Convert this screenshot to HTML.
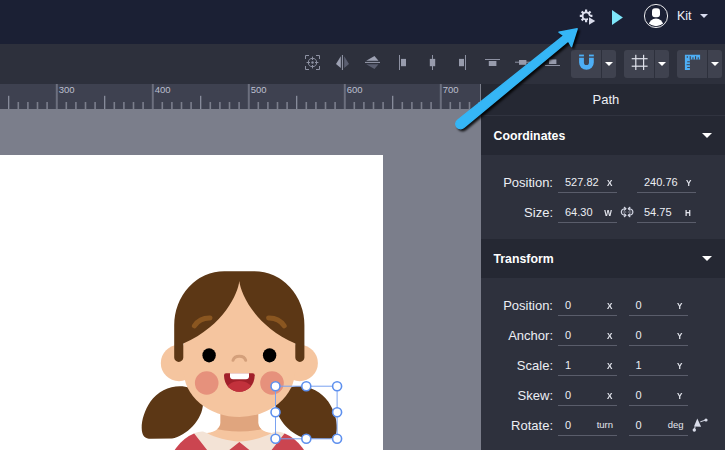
<!DOCTYPE html>
<html>
<head>
<meta charset="utf-8">
<style>
*{box-sizing:border-box;margin:0;padding:0}
html,body{width:725px;height:450px;overflow:hidden;background:#7b7e8b;font-family:"Liberation Sans",sans-serif;}
#app{position:relative;width:725px;height:450px;overflow:hidden}
.abs{position:absolute}
#topbar{left:0;top:0;width:725px;height:44px;background:#1b2034}
#toolbar{left:0;top:44px;width:725px;height:40px;background:#2d303c}
#ruler{left:0;top:84px;width:480px;height:25px;background:#3e4150;overflow:hidden}
#canvas{left:0;top:109px;width:481px;height:341px;background:#7b7e8b}
#art{left:0;top:155px;width:383px;height:295px;background:#fff}
#panel{left:481px;top:84px;width:244px;height:366px;background:#2e313d}
.sechead{left:0;width:244px;height:40px;background:#252833;color:#fff;font-weight:bold;font-size:12.3px;line-height:40px;padding-left:12.5px}
.lbl{color:#eceef4;font-size:13px;text-align:right;width:72px;left:0;line-height:16px;margin-top:2px}
.fld{border-bottom:1px solid #5a5d6b;height:22px;color:#eceef4;font-size:11px;line-height:16px}
.fld .v{position:absolute;left:7px;top:3px}
.fld .u{position:absolute;right:5px;top:4px;font-size:9.5px;font-weight:bold;color:#e4e6ee;transform:scaleX(0.85);transform-origin:right center}
.fld .u.w{font-size:9.5px;font-weight:normal;right:4px;top:3px;transform:none}
.tbtn{top:6px;height:28px;width:45px;background:#3f424f;border-radius:3px}
.tbtn .dv{position:absolute;left:30px;top:0;width:1px;height:28px;background:#2d303c}
.caret{position:absolute;width:0;height:0;border-left:5px solid transparent;border-right:5px solid transparent;border-top:5px solid #fff}
.rl{position:absolute;top:1px;font-size:9.5px;color:#bcbfce;line-height:10px}
</style>
</head>
<body>
<div id="app">
<div id="canvas" class="abs"></div>
<div id="art" class="abs"></div>
<svg class="abs" style="left:0;top:155px" width="383" height="295" viewBox="0 155 383 295">
<!-- pigtails -->
<path d="M190 388C177 382.8 159 389 150.5 401.5C144.8 410 141.5 420 141.7 428C141.8 436 145 438.8 151 438.8L172 438.6C186 436 203 420 203 403Z" fill="#5c3715"/>
<path d="M288.7 388C301.7 382.8 319.7 389 328.2 401.5C333.9 410 337.100 420 336.900 428C336.800 436 333.600 438.800 327.600 438.800L306.600 438.600C292.600 436 275.600 420 275.600 403Z" fill="#5c3715"/>
<!-- dress -->
<path d="M172.5 453L176.500 447.500Q184 437.500 194 433.500H284.700Q294.700 437.500 302.200 447.500L306.200 453Z" fill="#cb4550"/>
<!-- collar -->
<path d="M194 433.3Q199 431.300 203 431.500L207 433H271.700L275.700 431.500Q279.700 431.300 284.700 433.300L271.200 450.500H250L239.350 442L228.700 450.500H207.500Z" fill="#f3e3d6"/>
<!-- neck -->
<clipPath id="nk"><path d="M220.5 410V423C220 428 216 432 207 433C215 437.500 228 441 239.350 441.500C250.700 441 263.700 437.500 271.700 433C262.700 432 258.700 428 258.200 423V410Z"/></clipPath>
<path d="M220.5 410V423C220 428 216 432 207 433C215 437.500 228 441 239.350 441.500C250.700 441 263.700 437.500 271.700 433C262.700 432 258.700 428 258.200 423V410Z" fill="#f5c59f"/>
<path d="M210 410H269V427.500Q239.350 435.500 210 427.500Z" fill="#e0a57e" clip-path="url(#nk)"/>
<!-- ears -->
<circle cx="179" cy="363" r="18.2" fill="#f5c59f"/>
<circle cx="299.7" cy="363" r="18.2" fill="#f5c59f"/>
<!-- face -->
<path d="M183.5 345C183.5 300 215 276 239.3 276C263 276 295.2 300 295.2 345V370A55.85 47 0 0 1 183.5 370Z" fill="#f5c59f"/>
<!-- hair -->
<path d="M174.2 325.2A50 54 0 0 1 224.2 271.2H254.4A50 54 0 0 1 304.4 325.2V357.4A4.55 4.55 0 0 1 295.300 357.400V343.500C254.100 325.500 240.600 293 239.300 281C238 293 224.500 325.500 183.300 343.500V357.400A4.55 4.55 0 0 1 174.200 357.400Z" fill="#5c3715"/>
<!-- eyebrows -->
<path d="M194.4 325.8C198 320.5 203.5 317.8 210 318" fill="none" stroke="#8a5620" stroke-width="5" stroke-linecap="round"/>
<path d="M284.2 325.8C280.6 320.5 275.1 317.8 268.6 318" fill="none" stroke="#8a5620" stroke-width="5" stroke-linecap="round"/>
<!-- eyes -->
<ellipse cx="209.1" cy="355.3" rx="6.7" ry="7.1" fill="#000"/>
<ellipse cx="269.6" cy="355.3" rx="6.7" ry="7.1" fill="#000"/>
<!-- nose -->
<path d="M233 360.3C234.5 354.8 244.2 354.8 245.7 360.3" fill="none" stroke="#d4a07b" stroke-width="3" stroke-linecap="round"/>
<!-- cheeks -->
<circle cx="206.7" cy="383" r="11.8" fill="#e6917c"/>
<circle cx="272" cy="383" r="11.8" fill="#e6917c"/>
<!-- mouth -->
<clipPath id="mc"><path d="M226 373.3H252.7A2 2 0 0 1 254.700 375.300C254.700 385 248 391.800 239.350 391.800C230.700 391.800 224 385 224 375.300A2 2 0 0 1 226 373.300Z"/></clipPath>
<path d="M226 373.3H252.7A2 2 0 0 1 254.700 375.300C254.700 385 248 391.800 239.350 391.800C230.700 391.800 224 385 224 375.300A2 2 0 0 1 226 373.300Z" fill="#a1202a"/>
<ellipse cx="239.35" cy="392" rx="14" ry="11" fill="#c2313c" clip-path="url(#mc)"/>
<path d="M230 373.3H249V376.300A3 3 0 0 1 246 379.300H233A3 3 0 0 1 230 376.300Z" fill="#fff"/>
</svg>
<!-- selection -->
<svg class="abs" style="left:260px;top:370px" width="100" height="80" viewBox="260 370 100 80">
<rect x="275.5" y="386.2" width="61.6" height="52.6" fill="none" stroke="#7aa2f0" stroke-width="1"/>
<g fill="#fff" stroke="#5e90ee" stroke-width="1.6">
<circle cx="275.5" cy="386.2" r="4.5"/><circle cx="306.3" cy="386.2" r="4.5"/><circle cx="337.1" cy="386.2" r="4.5"/>
<circle cx="275.5" cy="412.3" r="4.5"/><circle cx="337.1" cy="412.3" r="4.5"/>
<circle cx="275.5" cy="438.8" r="4.5"/><circle cx="306.3" cy="438.8" r="4.5"/><circle cx="337.1" cy="438.8" r="4.5"/>
</g>
</svg>
<div id="ruler" class="abs">
<svg class="abs" style="left:0;top:0" width="481" height="25" id="rsvg"><rect x="-1.7" y="18" width="1.6" height="7" fill="#7b7e8c"/><rect x="8.1" y="11.8" width="1.2" height="13.2" fill="#9094a3"/><rect x="17.5" y="18" width="1.6" height="7" fill="#7b7e8c"/><rect x="27.1" y="18" width="1.6" height="7" fill="#7b7e8c"/><rect x="36.7" y="18" width="1.6" height="7" fill="#7b7e8c"/><rect x="46.3" y="18" width="1.6" height="7" fill="#7b7e8c"/><rect x="55.8" y="0" width="2" height="25" fill="#6c6f7e"/><rect x="65.5" y="18" width="1.6" height="7" fill="#7b7e8c"/><rect x="75.1" y="18" width="1.6" height="7" fill="#7b7e8c"/><rect x="84.7" y="18" width="1.6" height="7" fill="#7b7e8c"/><rect x="94.3" y="18" width="1.6" height="7" fill="#7b7e8c"/><rect x="104.1" y="11.8" width="1.2" height="13.2" fill="#9094a3"/><rect x="113.5" y="18" width="1.6" height="7" fill="#7b7e8c"/><rect x="123.1" y="18" width="1.6" height="7" fill="#7b7e8c"/><rect x="132.7" y="18" width="1.6" height="7" fill="#7b7e8c"/><rect x="142.3" y="18" width="1.6" height="7" fill="#7b7e8c"/><rect x="151.8" y="0" width="2" height="25" fill="#6c6f7e"/><rect x="161.5" y="18" width="1.6" height="7" fill="#7b7e8c"/><rect x="171.1" y="18" width="1.6" height="7" fill="#7b7e8c"/><rect x="180.7" y="18" width="1.6" height="7" fill="#7b7e8c"/><rect x="190.3" y="18" width="1.6" height="7" fill="#7b7e8c"/><rect x="200.1" y="11.8" width="1.2" height="13.2" fill="#9094a3"/><rect x="209.5" y="18" width="1.6" height="7" fill="#7b7e8c"/><rect x="219.1" y="18" width="1.6" height="7" fill="#7b7e8c"/><rect x="228.7" y="18" width="1.6" height="7" fill="#7b7e8c"/><rect x="238.3" y="18" width="1.6" height="7" fill="#7b7e8c"/><rect x="247.8" y="0" width="2" height="25" fill="#6c6f7e"/><rect x="257.5" y="18" width="1.6" height="7" fill="#7b7e8c"/><rect x="267.1" y="18" width="1.6" height="7" fill="#7b7e8c"/><rect x="276.7" y="18" width="1.6" height="7" fill="#7b7e8c"/><rect x="286.3" y="18" width="1.6" height="7" fill="#7b7e8c"/><rect x="296.1" y="11.8" width="1.2" height="13.2" fill="#9094a3"/><rect x="305.5" y="18" width="1.6" height="7" fill="#7b7e8c"/><rect x="315.1" y="18" width="1.6" height="7" fill="#7b7e8c"/><rect x="324.7" y="18" width="1.6" height="7" fill="#7b7e8c"/><rect x="334.3" y="18" width="1.6" height="7" fill="#7b7e8c"/><rect x="343.8" y="0" width="2" height="25" fill="#6c6f7e"/><rect x="353.5" y="18" width="1.6" height="7" fill="#7b7e8c"/><rect x="363.1" y="18" width="1.6" height="7" fill="#7b7e8c"/><rect x="372.7" y="18" width="1.6" height="7" fill="#7b7e8c"/><rect x="382.3" y="18" width="1.6" height="7" fill="#7b7e8c"/><rect x="392.1" y="11.8" width="1.2" height="13.2" fill="#9094a3"/><rect x="401.5" y="18" width="1.6" height="7" fill="#7b7e8c"/><rect x="411.1" y="18" width="1.6" height="7" fill="#7b7e8c"/><rect x="420.7" y="18" width="1.6" height="7" fill="#7b7e8c"/><rect x="430.3" y="18" width="1.6" height="7" fill="#7b7e8c"/><rect x="439.8" y="0" width="2" height="25" fill="#6c6f7e"/><rect x="449.5" y="18" width="1.6" height="7" fill="#7b7e8c"/><rect x="459.1" y="18" width="1.6" height="7" fill="#7b7e8c"/><rect x="468.7" y="18" width="1.6" height="7" fill="#7b7e8c"/><rect x="478.3" y="18" width="1.6" height="7" fill="#7b7e8c"/></svg>
<div class="rl" style="left:58.8px">300</div>
<div class="rl" style="left:154.8px">400</div>
<div class="rl" style="left:250.8px">500</div>
<div class="rl" style="left:346.8px">600</div>
<div class="rl" style="left:442.8px">700</div>
</div>
<div id="toolbar" class="abs">
<div class="abs tbtn" style="left:571px"><div class="dv"></div><div class="caret" style="left:34px;top:11.9px;border-left-width:4.1px;border-right-width:4.1px;border-top-width:4.3px"></div></div>
<div class="abs tbtn" style="left:624px"><div class="dv"></div><div class="caret" style="left:34px;top:11.9px;border-left-width:4.1px;border-right-width:4.1px;border-top-width:4.3px"></div></div>
<div class="abs tbtn" style="left:677px"><div class="dv"></div><div class="caret" style="left:34px;top:11.9px;border-left-width:4.1px;border-right-width:4.1px;border-top-width:4.3px"></div></div>
<svg class="abs" style="left:0;top:0" width="725" height="40" viewBox="0 44 725 40">
<g fill="none" stroke="#8d91a2" stroke-width="1">
<path d="M305.5 59V55.5H309 M316 55.5H319.5V59 M319.5 66V69.5H316 M309 69.5H305.5V66"/>
<circle cx="312.5" cy="62.5" r="4.1"/>
<path d="M312.5 56.6V60 M312.5 65V68.4 M306.6 62.5H310 M315 62.5H318.4"/>
</g>
<circle cx="312.5" cy="62.5" r="1.2" fill="#8d91a2"/>
<!-- flip h -->
<rect x="341.9" y="55" width="1.1" height="15" fill="#8d91a2"/>
<path d="M340.8 56.2L336 64L340.8 68Z" fill="#9da1b3"/>
<path d="M344.2 56.2L349 64L344.2 68Z" fill="#5a5e70"/>
<!-- flip v -->
<rect x="365" y="61.9" width="15" height="1.1" fill="#8d91a2"/>
<path d="M366.2 60.8L374.5 56L378.5 60.8Z" fill="#9da1b3"/>
<path d="M366.2 64.2L374.5 69L378.5 64.2Z" fill="#5a5e70"/>
<!-- align left -->
<rect x="399" y="55" width="1" height="15" fill="#8d91a2"/>
<rect x="401" y="58.9" width="5" height="7.3" fill="#979bac"/>
<!-- align center h -->
<rect x="432" y="55" width="1" height="15" fill="#8d91a2"/>
<rect x="429.8" y="58.9" width="5.4" height="7.3" fill="#979bac"/>
<!-- align right -->
<rect x="465" y="55" width="1" height="15" fill="#8d91a2"/>
<rect x="459" y="58.9" width="5" height="7.3" fill="#979bac"/>
<!-- align top -->
<rect x="485" y="59" width="15" height="1" fill="#8d91a2"/>
<rect x="488.8" y="61" width="7.6" height="5" fill="#979bac"/>
<!-- align middle -->
<rect x="515" y="61.7" width="15" height="1" fill="#8d91a2"/>
<rect x="519" y="60" width="7.4" height="4.8" fill="#979bac"/>
<!-- align bottom -->
<rect x="545" y="65" width="15" height="1" fill="#8d91a2"/>
<rect x="549" y="59.4" width="7.4" height="4.6" fill="#979bac"/>
<!-- magnet -->
<g fill="#4daef5">
<rect x="579.1" y="54.6" width="4.8" height="1.8"/>
<rect x="589" y="54.6" width="4.8" height="1.8"/>
<path d="M579.1 57.7H583.9V62.5A2.55 2.55 0 0 0 589 62.5V57.7H593.8V62.5A7.35 7.35 0 0 1 579.1 62.5Z"/>
</g>
<!-- grid -->
<g fill="#dfe1ea">
<rect x="635.2" y="54.8" width="1.2" height="15.2"/>
<rect x="643" y="54.8" width="1.2" height="15.2"/>
<rect x="631.7" y="58.1" width="15.9" height="1.2"/>
<rect x="631.7" y="65.6" width="15.9" height="1.2"/>
</g>
<!-- ruler -->
<path d="M684.9 54.8H700.1V59.6H689.9V70H684.9Z" fill="#4daef5"/>
<g fill="#3f424f">
<rect x="686.7" y="56.3" width="1.3" height="1.4"/>
<rect x="689.7" y="56.2" width="1.1" height="3.4"/>
<rect x="692.4" y="57.3" width="1.1" height="2.3"/>
<rect x="695" y="56.2" width="1.1" height="3.4"/>
<rect x="697.700" y="57.300" width="1.100" height="2.300"/>
<rect x="687.200" y="61.300" width="2.700" height="1"/>
<rect x="686.600" y="64.200" width="3.300" height="1"/>
<rect x="687.200" y="67" width="2.700" height="1"/>
</g>
</svg>
</div>
<div id="topbar" class="abs">
<svg class="abs" style="left:0;top:0" width="725" height="44" viewBox="0 0 725 44">
<!-- gear -->
<mask id="gm"><rect x="570" y="0" width="40" height="40" fill="#fff"/><path d="M588 15.2L597.5 21L588 27Z" fill="#000"/></mask>
<path d="M584.99 11.54L585.02 9.59L587.18 9.59L587.21 11.54L588.40 12.03L589.79 10.67L591.33 12.21L589.97 13.60L590.46 14.79L592.41 14.82L592.41 16.98L590.46 17.01L589.97 18.20L591.33 19.59L589.79 21.13L588.40 19.77L587.21 20.26L587.18 22.21L585.02 22.21L584.99 20.26L583.80 19.77L582.41 21.13L580.87 19.59L582.23 18.20L581.74 17.01L579.79 16.98L579.79 14.82L581.74 14.79L582.23 13.60L580.87 12.21L582.41 10.67L583.80 12.03ZM583.50 15.90A2.6 2.6 0 1 0 588.70 15.90A2.6 2.6 0 1 0 583.50 15.90Z" fill="#dddfee" fill-rule="evenodd" mask="url(#gm)"/>
<path d="M589 17.3L595.2 21L589 24.8Z" fill="#d9dbea"/>
<!-- play -->
<path d="M612 9.9L622.9 17.4L612 25Z" fill="#7ee6fa"/>
<!-- avatar -->
<circle cx="656" cy="16" r="11.6" fill="none" stroke="#fff" stroke-width="0.9"/>
<clipPath id="avc"><circle cx="656" cy="16" r="10.2"/></clipPath>
<rect x="652" y="8.3" width="8" height="9" rx="3" fill="#fff"/>
<ellipse cx="656" cy="25.5" rx="7.2" ry="7" fill="#fff" clip-path="url(#avc)"/>
</svg>
<div class="abs" style="left:677px;top:9px;font-size:12.5px;color:#eef0fa;line-height:15px">Kit</div>
<div class="caret" style="left:699.8px;top:14.1px;border-left-width:4.2px;border-right-width:4.2px;border-top-width:4.3px;border-top-color:#d9dcf0"></div>
</div>
<div id="panel" class="abs">
<svg class="abs" style="left:0;top:0" width="244" height="366" viewBox="481 84 244 366">
<g fill="none" stroke="#d3d6e3" stroke-width="1.2" stroke-linecap="round" stroke-linejoin="round">
<path d="M625.6 208.600C619.900 209 619.900 215 625.600 215.400"/>
<path d="M624.300 207.300L625.900 208.700L624.300 210.100"/>
<path d="M624.300 213.900L625.900 215.300L624.300 216.700"/>
<path d="M623.200 212H625.800" opacity="0.6"/>
<path d="M628.600 208.600C634.300 209 634.300 215 628.600 215.400"/>
<path d="M629.900 207.300L628.300 208.700L629.900 210.100"/>
<path d="M629.900 213.900L628.300 215.300L629.900 216.700"/>
<path d="M628.400 212H631" opacity="0.6"/>
</g>
<path d="M697.3 418.500L694 426.400L701.100 426.800Z" fill="#d9dce9"/>
<circle cx="694.300" cy="430" r="1.700" fill="#d9dce9"/>
<circle cx="706" cy="420" r="1.600" fill="#d9dce9"/>
<path d="M695.200 426.500L694.400 429.500M700.300 421.800L705.500 420.100" stroke="#d9dce9" stroke-width="1" fill="none"/>
</svg>
<div class="abs" style="left:0;top:0;width:244px;height:32px;background:#252833;border-bottom:1px solid #30333f;color:#eceef4;font-size:13px;line-height:31px"><span class="abs" style="left:111.5px;top:0">Path</span></div>
<div class="abs sechead" style="top:32px;height:39px;line-height:40px">Coordinates<div class="caret" style="left:221.3px;top:17.3px"></div></div>
<div class="abs sechead" style="top:155px;height:39px;line-height:41px">Transform<div class="caret" style="left:221.3px;top:17.3px"></div></div>
<div class="abs lbl" style="top:89px">Position:</div><div class="abs fld" style="left:77px;top:87px;width:59px"><span class="v">527.82</span><span class="u">X</span></div><div class="abs fld" style="left:156px;top:87px;width:59px"><span class="v">240.76</span><span class="u">Y</span></div><div class="abs lbl" style="top:119px">Size:</div><div class="abs fld" style="left:77px;top:117px;width:59px"><span class="v">64.30</span><span class="u">W</span></div><div class="abs fld" style="left:156px;top:117px;width:59px"><span class="v">54.75</span><span class="u">H</span></div><div class="abs lbl" style="top:212px">Position:</div><div class="abs fld" style="left:77px;top:210px;width:59px"><span class="v">0</span><span class="u">X</span></div><div class="abs fld" style="left:147.5px;top:210px;width:59px"><span class="v">0</span><span class="u">Y</span></div><div class="abs lbl" style="top:242px">Anchor:</div><div class="abs fld" style="left:77px;top:240px;width:59px"><span class="v">0</span><span class="u">X</span></div><div class="abs fld" style="left:147.5px;top:240px;width:59px"><span class="v">0</span><span class="u">Y</span></div><div class="abs lbl" style="top:272px">Scale:</div><div class="abs fld" style="left:77px;top:270px;width:59px"><span class="v">1</span><span class="u">X</span></div><div class="abs fld" style="left:147.5px;top:270px;width:59px"><span class="v">1</span><span class="u">Y</span></div><div class="abs lbl" style="top:302px">Skew:</div><div class="abs fld" style="left:77px;top:300px;width:59px"><span class="v">0</span><span class="u">X</span></div><div class="abs fld" style="left:147.5px;top:300px;width:59px"><span class="v">0</span><span class="u">Y</span></div><div class="abs lbl" style="top:332px">Rotate:</div><div class="abs fld" style="left:77px;top:330px;width:59px"><span class="v">0</span><span class="u w">turn</span></div><div class="abs fld" style="left:147.5px;top:330px;width:59px"><span class="v">0</span><span class="u w">deg</span></div>
</div>
<!-- arrow -->
<svg class="abs" style="left:440px;top:10px;filter:drop-shadow(2px 2.5px 1px rgba(0,0,0,0.85))" width="160" height="135" viewBox="440 10 160 135">
<path d="M457.47 120.28 L563.91 35.63 L558.94 32.07 L577.18 28.81 L571.55 46.57 L568.27 40.98 L463.53 127.72 A4.8 4.8 0 0 1 457.47 120.28Z" fill="#35b6f6" stroke="#35b6f6" stroke-width="1.4" stroke-linejoin="round"/>
</svg>
<!-- /arrow -->
</div>
</body>
</html>
